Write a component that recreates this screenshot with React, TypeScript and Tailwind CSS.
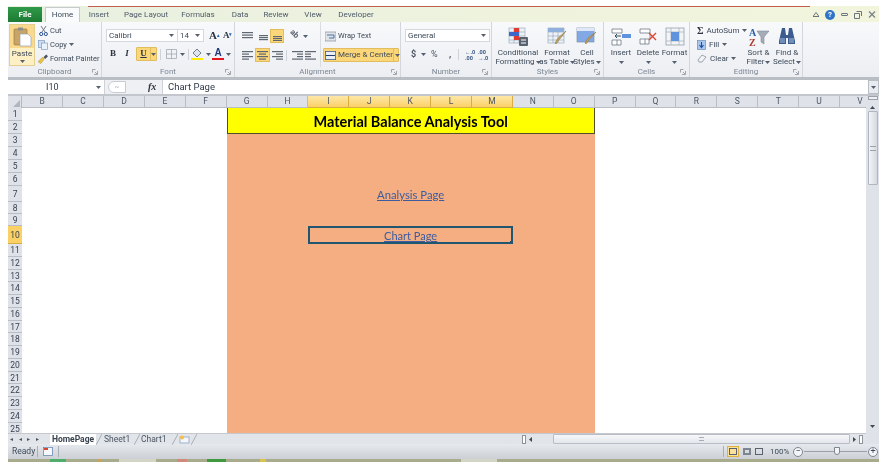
import type { ReactNode } from "react";

const columns = "BCDEFGHIJKLMNOPQRSTUV".split("");
const activeColumns = ["I", "J", "K", "L", "M"];
const rowHeights = [13, 13, 13, 13, 13, 13, 16, 12, 12, 18, ...Array<number>(15).fill(12.75)];
const menuTabs = [
  { name: "Insert", width: "w-[38px]" },
  { name: "Page Layout", width: "w-[56px]" },
  { name: "Formulas", width: "w-[48px]" },
  { name: "Data", width: "w-[36px]" },
  { name: "Review", width: "w-[36px]" },
  { name: "View", width: "w-[38px]" },
  { name: "Developer", width: "w-[48px]" },
];

const Caret = ({ className = "" }: { className?: string }) => (
  <svg width="5" height="3" viewBox="0 0 5 3" className={`shrink-0 ${className}`}>
    <path d="M0 0h5L2.5 3z" fill="#56606e" />
  </svg>
);

const Launcher = () => (
  <svg width="6" height="6" viewBox="0 0 6 6" className="absolute right-[3px] top-[2px]">
    <path d="M.5.5h3M.5.5v3M5.5 2v3.5H2M3 3l2 2" stroke="#8b929c" strokeWidth=".8" fill="none" />
  </svg>
);

const Group = ({ width, label, children }: { width: string; label: string; children: ReactNode }) => (
  <div className={`flex h-full shrink-0 flex-col border-r border-[#d3d7dd] ${width}`}>
    <div className="flex h-[45px] items-stretch">{children}</div>
    <div className="relative flex h-[10px] items-center justify-center text-[8px] leading-none text-[#7d8794]">
      {label}
      <Launcher />
    </div>
  </div>
);

const BigButton = ({ icon, top, bottom, width }: { icon: ReactNode; top: string; bottom?: string; width: string }) => (
  <div className={`flex shrink-0 flex-col items-center pt-[4px] text-[8px] leading-[8.5px] text-[#3e4a5a] ${width}`}>
    <div className="flex h-[21px] items-center">{icon}</div>
    <span className="mt-[2px] whitespace-nowrap">{top}</span>
    <span className="flex h-[9px] items-center gap-[1px] whitespace-nowrap">
      {bottom}
      <Caret />
    </span>
  </div>
);

const Lines = ({ rows }: { rows: number[][] }) => (
  <svg width="11" height="9" viewBox="0 0 11 9" className="shrink-0">
    {rows.map(([x, y, w], i) => (
      <rect key={i} x={x} y={y} width={w} height="1.2" fill="#5f6772" />
    ))}
  </svg>
);

const TableIcon = ({ children }: { children: ReactNode }) => (
  <svg width="22" height="20" viewBox="0 0 22 20">
    {children}
  </svg>
);

const SheetGrid = () => (
  <g stroke="#8ea0b6" strokeWidth=".6" fill="none">
    <rect x="2" y="1" width="16" height="15" fill="#eef2f7" />
    <path d="M2 5h16M2 9h16M2 13h16M7 1v15M12 1v15" />
  </g>
);

const Ribbon = () => (
  <div className="flex h-[55px] w-full bg-gradient-to-b from-[#f8f9fb] to-[#eceef2]">
    <Group width="w-[94px]" label="Clipboard">
      <div className="ml-[1px] mt-[2px] flex h-[42px] w-[26px] shrink-0 flex-col items-center border border-[#e3cf8e] bg-[#fdf0c4]">
        <div className="flex h-[23px] w-full items-center justify-center bg-[#fad88c]">
          <svg width="19" height="20" viewBox="0 0 19 20">
            <rect x="1" y="2" width="13" height="16" rx="1" fill="#c8a468" stroke="#8f7340" strokeWidth=".6" />
            <rect x="5" y="0.5" width="5" height="3" fill="#8d8d8d" />
            <path d="M7 7h8l3 3v9H7z" fill="#fff" stroke="#9aa4b2" strokeWidth=".7" />
          </svg>
        </div>
        <span className="mt-[1px] text-[8px] leading-[9px] text-[#3e4a5a]">Paste</span>
        <Caret className="mt-[2px]" />
      </div>
      <div className="ml-[3px] flex flex-col gap-[3px] pt-[3px] text-[7.5px] leading-[10px] text-[#3e4a5a]">
        <div className="flex h-[11px] items-center gap-[2px]">
          <span className="flex w-[10px] justify-center">
            <svg width="9" height="10" viewBox="0 0 9 10">
              <path d="M2 0l4 6M7 0L3 6" stroke="#6f7a88" strokeWidth="1" />
              <circle cx="2.2" cy="8" r="1.6" fill="none" stroke="#2a4f8f" />
              <circle cx="6.8" cy="8" r="1.6" fill="none" stroke="#2a4f8f" />
            </svg>
          </span>
          Cut
        </div>
        <div className="flex h-[11px] items-center gap-[2px]">
          <span className="flex w-[10px] justify-center">
            <svg width="10" height="10" viewBox="0 0 10 10">
              <rect x="0.5" y="0.5" width="6" height="7" fill="#cfe0f2" stroke="#7f9cc0" strokeWidth=".7" />
              <rect x="3.5" y="3" width="6" height="6.5" fill="#eaf2fa" stroke="#7f9cc0" strokeWidth=".7" />
            </svg>
          </span>
          <span className="flex items-center gap-[2px]">
            Copy <Caret />
          </span>
        </div>
        <div className="flex h-[11px] items-center gap-[2px] whitespace-nowrap">
          <span className="flex w-[10px] justify-center">
            <svg width="11" height="10" viewBox="0 0 11 10">
              <path d="M0 8l5-5 2 2-4 5z" fill="#e9c44c" stroke="#a58529" strokeWidth=".5" />
              <path d="M6 3l3-3 2 2-3 3z" fill="#4a5260" />
            </svg>
          </span>
          Format Painter
        </div>
      </div>
    </Group>

    <Group width="w-[133px]" label="Font">
      <div className="flex flex-col pl-[4px] pt-[7px] text-[8px] text-[#3e4a5a]">
        <div className="flex h-[13px] items-center">
          <div className="flex h-full w-[72px] items-center justify-between border border-[#d5d9df] bg-white pl-[2px] pr-[3px]">
            Calibri
            <Caret />
          </div>
          <div className="flex h-full w-[26px] items-center justify-between border border-l-0 border-[#d5d9df] bg-white pl-[2px] pr-[3px]">
            14
            <Caret />
          </div>
          <span className="ml-[5px] font-['Liberation_Serif',serif] text-[11px] font-bold leading-none text-[#2c3440]">
            A<sup className="text-[5px] text-[#2a6ab0]">▴</sup>
          </span>
          <span className="ml-[3px] font-['Liberation_Serif',serif] text-[9px] font-bold leading-none text-[#2c3440]">
            A<sup className="text-[5px] text-[#2a6ab0]">▾</sup>
          </span>
        </div>
        <div className="mt-[5px] flex h-[14px] items-center font-['Liberation_Serif',serif] text-[9px] font-bold text-[#2c3440]">
          <span className="w-[14px] text-center">B</span>
          <span className="w-[14px] text-center italic">I</span>
          <div className="ml-[2px] flex h-full w-[21px] items-center rounded-[1px] border border-[#e2bd5f] bg-[#fcd779] underline">
            <span className="w-[14px] text-center">U</span>
            <span className="flex h-full flex-1 items-center justify-center border-l border-[#e2bd5f]">
              <Caret />
            </span>
          </div>
          <div className="mx-[3px] h-[11px] w-px bg-[#cfd3d9]" />
          <svg width="11" height="10" viewBox="0 0 11 10" className="ml-[2px]">
            <path d="M.5.5h10v9H.5zM.5 5h10M5.5.5v9" stroke="#a2a9b2" fill="none" strokeWidth=".8" />
          </svg>
          <Caret className="ml-[3px]" />
          <div className="ml-[3px] mr-[2px] h-[11px] w-px bg-[#cfd3d9]" />
          <svg width="12" height="12" viewBox="0 0 12 12">
            <path d="M2 5l4-4 4 4-4 4z" fill="#dfe5ec" stroke="#59626e" strokeWidth=".8" />
            <rect x="0" y="10" width="12" height="2" fill="#ffee00" />
          </svg>
          <Caret className="ml-[3px]" />
          <div className="ml-[1px] flex w-[12px] flex-col items-center font-['Liberation_Sans',sans-serif] text-[10px] leading-[9px] text-[#223a7a]">
            A
            <span className="mt-[1px] h-[2px] w-full bg-[#e8141c]" />
          </div>
          <Caret className="ml-[2px]" />
        </div>
      </div>
    </Group>

    <Group width="w-[166px]" label="Alignment">
      <div className="flex w-[85px] shrink-0 flex-col pl-[5px] pt-[7px]">
        <div className="flex h-[14px] items-center">
          <div className="flex w-[15px] justify-center">
            <Lines rows={[[0, 0, 11], [0, 2.5, 11], [0, 5, 11]]} />
          </div>
          <div className="flex w-[15px] justify-center">
            <Lines rows={[[2, 3, 9], [2, 5, 9], [2, 7, 9]]} />
          </div>
          <div className="flex h-[14px] w-[14px] items-center justify-center border border-[#e2bd5f] bg-[#fcd779]">
            <Lines rows={[[1, 4, 9], [1, 6, 9], [1, 8, 9]]} />
          </div>
          <span className="ml-[5px] w-[14px] rotate-45 text-[8px] font-bold leading-none text-[#59626e]">ab</span>
          <Caret />
        </div>
        <div className="mt-[5px] flex h-[14px] items-center">
          <div className="flex w-[15px] justify-center">
            <Lines rows={[[0, 0, 11], [0, 2.5, 7], [0, 5, 11], [0, 7.5, 7]]} />
          </div>
          <div className="flex h-[14px] w-[15px] items-center justify-center border border-[#e2bd5f] bg-[#fcd779]">
            <Lines rows={[[0, 0, 11], [2, 2.5, 7], [0, 5, 11], [2, 7.5, 7]]} />
          </div>
          <div className="flex w-[14px] justify-center">
            <Lines rows={[[0, 0, 11], [4, 2.5, 7], [0, 5, 11], [4, 7.5, 7]]} />
          </div>
          <div className="ml-[2px] mr-[4px] h-[11px] w-px bg-[#cfd3d9]" />
          <div className="flex w-[13px] justify-center">
            <Lines rows={[[0, 0, 11], [5, 2.5, 6], [5, 5, 6], [0, 7.5, 11]]} />
          </div>
          <div className="flex w-[13px] justify-center">
            <Lines rows={[[0, 0, 11], [0, 2.5, 6], [0, 5, 6], [0, 7.5, 11]]} />
          </div>
        </div>
      </div>
      <div className="flex flex-col border-l border-[#d8dce1] pl-[2px] pt-[7px] text-[8px] text-[#3e4a5a]">
        <div className="flex h-[14px] items-center gap-[2px] pl-[2px] text-[7.5px]">
          <svg width="11" height="11" viewBox="0 0 11 11" className="shrink-0">
            <rect x="0" y="1" width="11" height="9" fill="#dfe3e8" stroke="#8a919b" strokeWidth=".7" />
            <path d="M2 4h7v3H4" stroke="#4d6ea3" fill="none" />
          </svg>
          Wrap Text
        </div>
        <div className="mt-[5px] flex h-[14px] w-[76px] items-center rounded-[1px] border border-[#e2bd5f] bg-[#fcd779]">
          <svg width="11" height="9" viewBox="0 0 11 9" className="ml-[1px] mr-[2px] shrink-0">
            <rect x="0.4" y="0.4" width="10.2" height="8.2" fill="#e9eef5" stroke="#3e5f8f" strokeWidth=".8" />
            <path d="M1 4.5h9" stroke="#1f3d6d" />
          </svg>
          <span className="flex-1 whitespace-nowrap">Merge &amp; Center</span>
          <span className="flex h-full w-[8px] shrink-0 items-center justify-center border-l border-[#e2bd5f]">
            <Caret />
          </span>
        </div>
      </div>
    </Group>

    <Group width="w-[91px]" label="Number">
      <div className="flex flex-col pl-[4px] pt-[7px] text-[8px] text-[#3e4a5a]">
        <div className="flex h-[13px] w-[85px] items-center justify-between border border-[#d5d9df] bg-white pl-[2px] pr-[3px]">
          General
          <Caret />
        </div>
        <div className="mt-[6px] flex h-[13px] items-center text-[9px] font-bold text-[#4b5563]">
          <span className="ml-[6px] w-[10px]">$</span>
          <Caret />
          <span className="ml-[5px] w-[15px] font-normal">%</span>
          <span className="ml-[3px] w-[9px]">,</span>
          <div className="mr-[6px] h-[11px] w-px bg-[#cfd3d9]" />
          <span className="w-[13px] text-[5.5px] leading-[6px] text-[#3b5a85]">
            ←.0
            <br />
            .00
          </span>
          <span className="w-[13px] text-[5.5px] leading-[6px] text-[#3b5a85]">
            .00
            <br />
            →.0
          </span>
        </div>
      </div>
    </Group>

    <Group width="w-[112px]" label="Styles">
      <div className="flex pl-[5px]">
        <BigButton
          width="w-[42px]"
          top="Conditional"
          bottom="Formatting"
          icon={
            <TableIcon>
              <SheetGrid />
              <rect x="7" y="1" width="5" height="4" fill="#e03b32" />
              <rect x="2" y="5" width="10" height="4" fill="#3c69c9" />
              <rect x="7" y="9" width="5" height="4" fill="#e03b32" />
              <rect x="12" y="10" width="9" height="9" rx="1" fill="#59626e" />
              <path d="M14 13h5M14 16h5" stroke="#fff" />
            </TableIcon>
          }
        />
        <BigButton
          width="w-[36px]"
          top="Format"
          bottom="as Table"
          icon={
            <TableIcon>
              <SheetGrid />
              <rect x="2" y="1" width="16" height="4" fill="#8fb0dc" />
              <path d="M20 4l-7 9 -3 4 -1-1 3-5z" fill="#c9a45a" stroke="#7a6a45" strokeWidth=".5" />
            </TableIcon>
          }
        />
        <BigButton
          width="w-[24px]"
          top="Cell"
          bottom="Styles"
          icon={
            <TableIcon>
              <rect x="1" y="1" width="17" height="14" fill="#82a8e6" stroke="#7f93ad" strokeWidth=".7" />
              <rect x="1" y="1" width="17" height="3" fill="#dfe8f4" />
              <path d="M20 5l-7 8 -3 4 -1-1 3-5z" fill="#c9a45a" stroke="#7a6a45" strokeWidth=".5" />
            </TableIcon>
          }
        />
      </div>
    </Group>

    <Group width="w-[86px]" label="Cells">
      <div className="flex pl-[3px]">
        <BigButton
          width="w-[28px]"
          top="Insert"
          icon={
            <TableIcon>
              <path d="M2 2h10v4H2zM2 13h9v5H2zM7 13v5" stroke="#6d7886" fill="#fff" strokeWidth=".8" />
              <rect x="12" y="7" width="9" height="4" fill="#5f93dd" />
              <path d="M11 9H5M7 7L5 9l2 2" stroke="#384a66" fill="none" />
            </TableIcon>
          }
        />
        <BigButton
          width="w-[26px]"
          top="Delete"
          icon={
            <TableIcon>
              <path d="M3 2h10v4H3zM3 12h9v5H3zM8 12v5M13 6v6" stroke="#6d7886" fill="#fff" strokeWidth=".8" />
              <path d="M12 6l7 7M19 6l-7 7" stroke="#e2442f" strokeWidth="1.4" />
            </TableIcon>
          }
        />
        <BigButton
          width="w-[27px]"
          top="Format"
          icon={
            <TableIcon>
              <rect x="2" y="1" width="18" height="17" fill="#f2f4f7" stroke="#8a94a2" strokeWidth=".7" />
              <path d="M2 5h18M2 14h18M7 1v17M15 1v17" stroke="#a5adb8" strokeWidth=".7" />
              <rect x="7" y="5" width="8" height="9" fill="#5f93dd" />
            </TableIcon>
          }
        />
      </div>
    </Group>

    <Group width="w-[113px]" label="Editing">
      <div className="flex w-[56px] shrink-0 flex-col gap-[3px] pl-[7px] pt-[3px] text-[8px] leading-[10px] text-[#3e4a5a]">
        <div className="flex h-[11px] items-center gap-[3px] whitespace-nowrap">
          <span className="w-[8px] text-center font-['Liberation_Serif',serif] text-[10px] font-bold leading-none text-[#30363f]">Σ</span>
          AutoSum
          <Caret />
        </div>
        <div className="flex h-[11px] items-center gap-[3px]">
          <svg width="9" height="10" viewBox="0 0 9 10">
            <rect x="0.4" y="0.4" width="8.2" height="9.2" fill="#a9c6ee" stroke="#6f8db8" strokeWidth=".7" />
            <path d="M4.5 2v5M2.5 5l2 2.5 2-2.5" stroke="#1e4fa3" fill="none" strokeWidth="1.1" />
          </svg>
          Fill
          <Caret />
        </div>
        <div className="flex h-[11px] items-center gap-[3px]">
          <svg width="10" height="9" viewBox="0 0 10 9">
            <path d="M1 6l4-5 4 2-4 5H2z" fill="#f2f4f7" stroke="#7a828d" strokeWidth=".7" />
          </svg>
          Clear
          <Caret />
        </div>
      </div>
      <BigButton
        width="w-[25px]"
        top="Sort &"
        bottom="Filter"
        icon={
          <svg width="22" height="20" viewBox="0 0 22 20">
            <path d="M9 4h12l-5 6v7l-3-2v-5z" fill="#a5adb8" stroke="#757d88" strokeWidth=".5" />
            <text x="1" y="9" fontSize="10" fontWeight="700" fill="#2a5ea8" fontFamily="Liberation Serif">A</text>
            <text x="1" y="19" fontSize="10" fontWeight="700" fill="#b03a2e" fontFamily="Liberation Serif">Z</text>
          </svg>
        }
      />
      <BigButton
        width="w-[32px]"
        top="Find &"
        bottom="Select"
        icon={
          <svg width="20" height="19" viewBox="0 0 20 19">
            <path d="M5 1h3l1 7h2l1-7h3l3 13v3h-7v-6H9v6H2v-3z" fill="#3b5c8c" />
            <rect x="3" y="11" width="5" height="5" fill="#6e8eb9" />
            <rect x="12" y="11" width="5" height="5" fill="#6e8eb9" />
          </svg>
        }
      />
    </Group>
  </div>
);

const FormulaBar = () => (
  <div className="flex h-[14px] items-center bg-white text-[10px] text-[#2f3a48]">
    <div className="flex h-full w-[97px] items-center border-r border-[#cfd3d8] pr-[3px]">
      <span className="flex-1 pl-[38px] text-[9px] leading-none">I10</span>
      <Caret />
    </div>
    <div className="flex h-full w-[57px] items-center bg-[#eef0f3]">
      <span className="ml-[3px] flex h-[12px] w-[18px] items-center justify-center rounded-l-full border border-[#c8ccd2] bg-white text-[7px] text-[#a8aeb7]">~</span>
      <span className="ml-[22px] font-['Liberation_Serif',serif] text-[10px] font-bold italic leading-none text-[#2c3440]">fx</span>
    </div>
    <span className="flex-1 border-l border-[#cfd3d8] pl-[5px] text-[9.5px] leading-[14px]">Chart Page</span>
    <div className="flex h-full w-[11px] items-center justify-center border border-[#b9bec5] bg-[#e8ebef]">
      <Caret />
    </div>
  </div>
);

const Grid = () => (
  <div className="h-[337px] overflow-hidden">
    <div className="flex h-[12px]">
      <div className="flex w-[14.2px] shrink-0 items-end justify-end border-r border-[#b5bac1] bg-[#dfe3e9] p-px">
        <span className="h-0 w-0 border-b-[7px] border-l-[7px] border-b-[#b0b6be] border-l-transparent" />
      </div>
      {columns.map((c) => (
        <div
          key={c}
          className={
            activeColumns.includes(c)
              ? "flex w-[40.9px] shrink-0 items-center justify-center border-r border-b border-[#d9ac44] bg-gradient-to-b from-[#fde7a6] to-[#fbd166] text-[8.5px] text-[#4b5563]"
              : "flex w-[40.9px] shrink-0 items-center justify-center border-r border-b border-[#b9bec6] bg-[#dfe3e9] text-[8.5px] text-[#4b5563]"
          }
        >
          {c}
        </div>
      ))}
    </div>
    <div className="flex h-[325px]">
      <div className="w-[14.2px] shrink-0">
        {rowHeights.map((h, i) => (
          <div
            key={i}
            style={{ height: h }}
            className={
              i === 9
                ? "flex items-center justify-center border-b border-[#d9ac44] bg-[#fbd166] pt-px text-[8.5px] text-[#374151]"
                : "flex items-center justify-center border-b border-[#b9bec6] bg-[#dfe3e9] pt-px text-[8.5px] text-[#374151]"
            }
          >
            {i + 1}
          </div>
        ))}
      </div>
      <div
        className="grid flex-1 grid-cols-[repeat(21,40.9px)] bg-white font-['Lato',sans-serif]"
        style={{ gridTemplateRows: rowHeights.map((h) => `${h}px`).join(" ") }}
      >
        <div className="col-start-6 col-end-15 row-start-1 row-end-3 flex items-end justify-center border border-t-0 border-[#4f4f2c] bg-[#ffff00] pb-[2px] text-[14.5px] font-bold leading-[18px] text-black">
          Material Balance Analysis Tool
        </div>
        <div className="col-start-6 col-end-15 row-start-3 row-end-26 bg-[#f4ae82]" />
        <a className="col-start-6 col-end-15 row-start-7 self-center text-center text-[11.3px] leading-[15px] text-[#3d5c9e] underline">
          Analysis Page
        </a>
        <div className="relative col-start-8 col-end-13 row-start-10 flex items-end justify-center border-2 border-[#20566f] text-[11px] leading-[13px] text-[#3d5c9e] underline">
          Chart Page
          <span className="absolute -bottom-[2px] -right-[2px] h-[3px] w-[3px] bg-[#20566f]" />
        </div>
      </div>
    </div>
  </div>
);

const Slant = () => (
  <svg width="6" height="11" viewBox="0 0 6 11" className="shrink-0">
    <path d="M0 11L6 0" stroke="#9aa1ab" strokeWidth=".8" />
  </svg>
);

const SheetTabs = () => (
  <div className="flex h-[11px] items-center border-t border-[#c5c9cf] bg-[#e1e5ea] pl-[2px] text-[8.5px] leading-[11px] text-[#4b5563]">
    <span className="w-[38px] whitespace-nowrap text-[6px] leading-none tracking-[5.5px]">◂◂▸▸</span>
    <span className="ml-[2px] w-[46px] bg-white text-center font-bold text-[#39424f]">HomePage</span>
    <Slant />
    <span className="w-[32px] pl-[2px]">Sheet1</span>
    <Slant />
    <span className="w-[32px] pl-[1px]">Chart1</span>
    <Slant />
    <svg width="12" height="9" viewBox="0 0 12 9" className="ml-[1px]">
      <rect x="1" y="2" width="9" height="6" fill="#f3f5f8" stroke="#7f9cc0" strokeWidth=".7" />
      <circle cx="3" cy="2.5" r="2" fill="#f2c04a" />
    </svg>
    <Slant />
    <div className="ml-auto flex items-center pr-[3px]">
      <span className="h-[9px] w-[4px] border border-[#8d949e] bg-white" />
      <svg width="3" height="5" viewBox="0 0 3 5" className="ml-[3px]">
        <path d="M3 0v5L0 2.5z" fill="#3f4854" />
      </svg>
      <div className="ml-[21px] flex h-[10px] w-[297px] items-center justify-center rounded-[1px] border border-[#b9bec6] bg-gradient-to-b from-[#f6f7f9] to-[#e3e6eb]">
        <span className="h-[4px] w-[5px] border-y border-[#a6acb5]" />
      </div>
      <svg width="3" height="5" viewBox="0 0 3 5" className="ml-[3px]">
        <path d="M0 0v5l3-2.5z" fill="#3f4854" />
      </svg>
      <span className="ml-[3px] h-[9px] w-[4px] border border-[#8d949e] bg-white" />
    </div>
  </div>
);

const Sheet = () => (
  <div className="flex h-[348px] w-full">
    <div className="h-full w-[858px]">
      <Grid />
      <SheetTabs />
    </div>
    <div className="flex w-[13px] shrink-0 flex-col items-center bg-[#dfe3e9]">
      <div className="h-[4px] w-[10px] border border-[#9aa1ab] bg-[#eef0f3]" />
      <svg width="5" height="3" viewBox="0 0 5 3" className="mt-[6px]">
        <path d="M0 3h5L2.5 0z" fill="#3f4854" />
      </svg>
      <div className="mt-[2px] flex h-[74px] w-[10px] items-center justify-center rounded-[1px] border border-[#b0b6bf] bg-gradient-to-r from-[#f2f4f7] to-[#d5d9df]">
        <span className="h-[5px] w-[6px] border-y border-[#9aa1ab]" />
      </div>
      <svg width="5" height="3" viewBox="0 0 5 3" className="mt-auto mb-[16px]">
        <path d="M0 0h5L2.5 3z" fill="#3f4854" />
      </svg>
    </div>
  </div>
);

const StatusBar = () => (
  <div className="flex h-[15px] items-center bg-gradient-to-b from-[#e6e9ed] to-[#ccd0d6] text-[8.5px] text-[#3e4a5a]">
    <span className="ml-[4px] w-[25px]">Ready</span>
    <span className="h-[11px] w-px bg-[#a9aeb6]" />
    <svg width="10" height="9" viewBox="0 0 10 9" className="ml-[5px]">
      <rect x="0.4" y="0.4" width="9" height="8" fill="#f5f7fa" stroke="#5b7fb0" strokeWidth=".7" />
      <rect x="1" y="1" width="4" height="2" fill="#d9452f" />
    </svg>
    <span className="ml-[5px] h-[11px] w-px bg-[#a9aeb6]" />
    <span className="ml-[664px] h-[11px] w-px bg-[#a9aeb6]" />
    <span className="ml-[3px] flex h-[11px] w-[12px] items-center justify-center border border-[#e2b23e] bg-[#fbe29a]">
      <span className="h-[7px] w-[8px] border border-[#59626e]" />
    </span>
    <span className="ml-[2px] flex h-[11px] w-[11px] items-center justify-center">
      <span className="h-[7px] w-[8px] border-2 border-[#7d8590]" />
    </span>
    <span className="ml-[1px] flex h-[11px] w-[11px] items-center justify-center">
      <span className="h-[7px] w-[8px] border border-[#59626e]" />
    </span>
    <span className="ml-[6px] w-[23px] text-[8px]">100%</span>
    <span className="flex h-[10px] w-[10px] items-center justify-center rounded-full border border-[#7d8590] bg-[#f3f5f8] text-[9px] leading-none">−</span>
    <div className="relative mx-[1px] h-px w-[63px] bg-[#9aa1ab]">
      <span className="absolute -top-[4px] left-[30px] h-[8px] w-[6px] rounded-b-full border border-[#7d8590] bg-[#f3f5f8]" />
    </div>
    <span className="flex h-[10px] w-[10px] items-center justify-center rounded-full border border-[#7d8590] bg-[#f3f5f8] text-[9px] leading-none">+</span>
  </div>
);

export default function App() {
  return (
    <div className="h-[470px] w-[886px] overflow-hidden bg-white pl-[8px] pt-[6px] font-['Roboto',sans-serif] blur-[0.3px]">
      <div className="w-[871px]">
        {/* tab strip */}
        <div className="relative flex h-[16px] items-end bg-gradient-to-r from-[#e9f0e0] to-[#f2f5dc]">
          <span className="absolute left-[80px] top-0 h-px w-[722px] bg-[#c0604a]" />
          <div className="flex h-[15px] w-[34px] items-center justify-center bg-gradient-to-b from-[#2f9a49] to-[#1d7a34] text-[8px] font-bold text-white">
            File
          </div>
          <div className="ml-[3px] flex h-[15px] w-[35px] items-center justify-center rounded-t-[1px] border border-b-0 border-[#c5cbd1] bg-[#fafbfc] text-[8px] text-[#3e4a5a]">
            Home
          </div>
          {menuTabs.map((t) => (
            <div key={t.name} className={`flex h-[15px] items-center justify-center whitespace-nowrap text-[8px] text-[#4f5b6a] ${t.width}`}>
              {t.name}
            </div>
          ))}
          <div className="ml-auto mr-[3px] flex h-[15px] items-center gap-[6px]">
            <svg width="6" height="5" viewBox="0 0 6 5">
              <path d="M0 4.5L3 .5l3 4z" fill="none" stroke="#4b5563" strokeWidth=".8" />
            </svg>
            <span className="flex h-[10px] w-[10px] items-center justify-center rounded-full bg-[#2f74c7] text-[8px] font-bold leading-none text-white">?</span>
            <span className="h-[3px] w-[7px] rounded-[1px] border border-[#6b7480]" />
            <svg width="8" height="8" viewBox="0 0 8 8">
              <path d="M2.5.5h5v4.5M.5 2.5h5v5h-5z" fill="none" stroke="#6b7480" />
            </svg>
            <svg width="8" height="7" viewBox="0 0 8 7">
              <path d="M1 .5l6 6M7 .5l-6 6" stroke="#7d8590" strokeWidth="1.4" />
            </svg>
          </div>
        </div>

        <Ribbon />
        <div className="h-[3px] bg-[#b9bec5]" />
        <FormulaBar />
        <div className="h-[2px] bg-[#c3c7cd]" />
        <Sheet />
        <StatusBar />

        {/* desktop peeking out under the window */}
        <div className="flex h-[3px] items-stretch bg-[#a9ab8d]">
          <span className="ml-[42px] w-[16px] bg-[#4fae6a]" />
          <span className="ml-[31px] w-[5px] bg-[#c9a35a]" />
          <span className="ml-[17px] w-[37px] bg-[#d3d6c6]" />
          <span className="ml-[21px] w-[10px] bg-[#d08a7a]" />
          <span className="ml-[20px] w-[19px] bg-[#3f9a3f]" />
          <span className="ml-[34px] w-[6px] bg-[#d8c44a]" />
          <span className="ml-[195px] w-[36px] bg-[#d3d6c6]" />
        </div>
      </div>
    </div>
  );
}
